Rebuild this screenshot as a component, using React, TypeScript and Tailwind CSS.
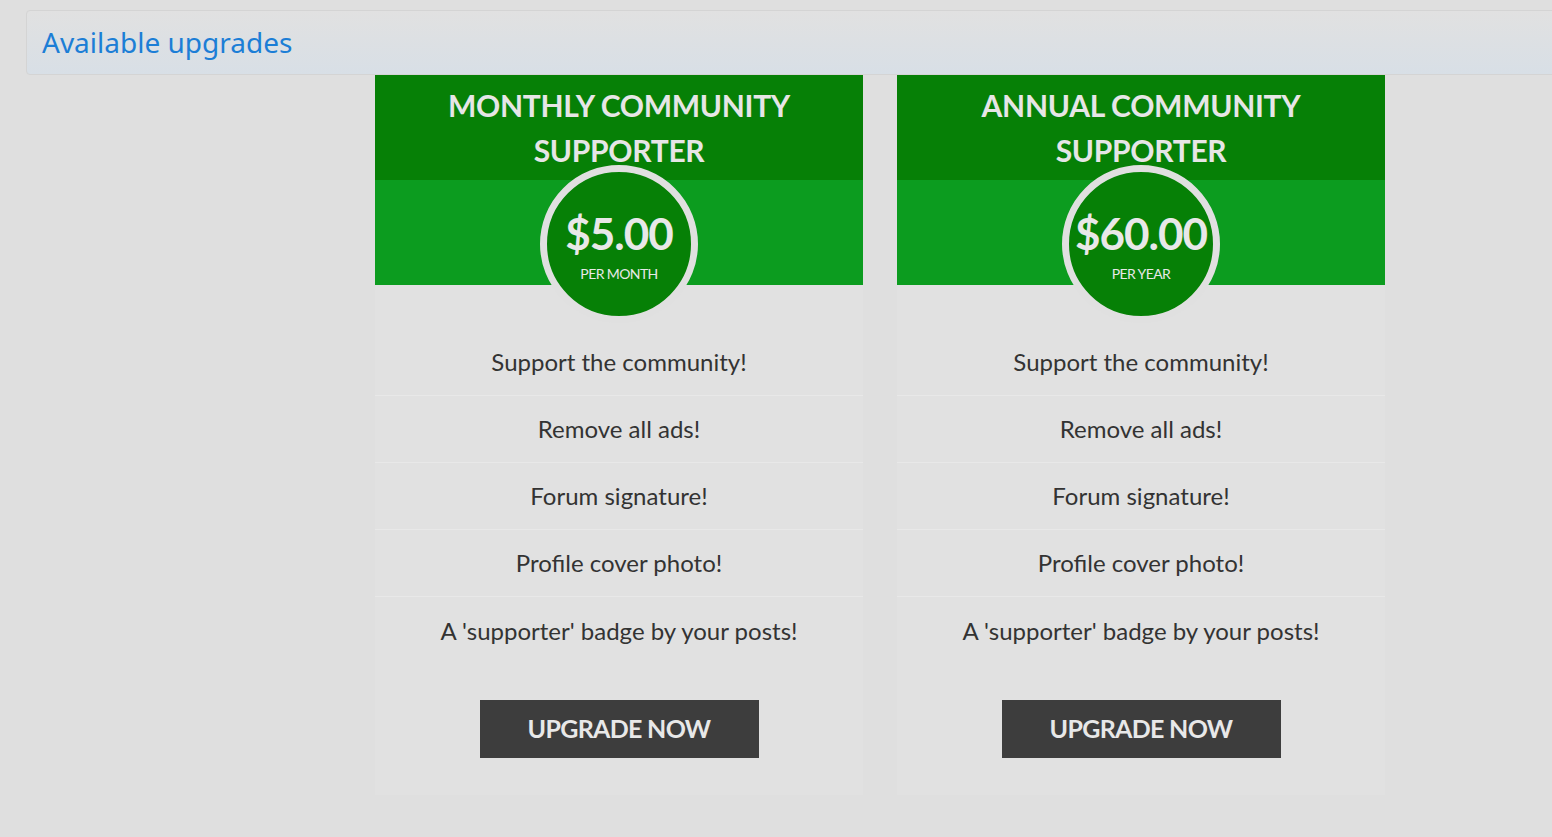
import React from "react";

type Plan = {
    title: string[];
    price: string;
    period: string;
};

const PLANS: Plan[] = [
    { title: ["MONTHLY COMMUNITY", "SUPPORTER"], price: "$5.00", period: "PER MONTH" },
    { title: ["ANNUAL COMMUNITY", "SUPPORTER"], price: "$60.00", period: "PER YEAR" },
];

const FEATURES = [
    "Support the community!",
    "Remove all ads!",
    "Forum signature!",
    "Profile cover photo!",
    "A 'supporter' badge by your posts!",
];

const PlanCard = ({ plan }: { plan: Plan }) => (
    <div className="w-[488px] bg-[#e1e1e1] flex flex-col">
        {/* Title */}
        <div className="bg-[#068006] pt-[8px] pb-[7px] text-center text-[30px] leading-[45px] font-bold text-[#e6e6e6] tracking-[-0.3px]">
            {plan.title.map((line) => (
                <div key={line}>{line}</div>
            ))}
        </div>

        {/* Price band + circle */}
        <div className="bg-[#0c9c1f] h-[105px] flex justify-center">
            <div className="relative z-10 mt-[-15px] w-[158px] h-[158px] rounded-full border-[7px] border-[#e0e0e0] bg-[#068006] flex flex-col items-center pt-[36px] text-[#e8e8e8]">
                <span className="text-[44px] leading-[50px] font-bold tracking-[-1px]">{plan.price}</span>
                <span className="mt-[8px] text-[14px] leading-[16px] tracking-[-0.6px]">{plan.period}</span>
            </div>
        </div>

        {/* Features */}
        <div className="pt-[44px] flex flex-col">
            {FEATURES.map((f, i) => (
                <div
                    key={f}
                    className={`h-[67px] flex items-center justify-center text-[24px] text-[#333333] ${
                        i < FEATURES.length - 1 ? "border-b border-[#e8e8e8]" : ""
                    }`}
                >
                    {f}
                </div>
            ))}
        </div>

        {/* Button */}
        <div className="flex justify-center pt-[36px] pb-[37px]">
            <button className="w-[279px] h-[58px] bg-[#3d3d3d] text-[#e8e8e8] text-[25px] font-bold tracking-[-0.7px]">
                UPGRADE NOW
            </button>
        </div>
    </div>
);

export default function App() {
    return (
        <div className="min-h-[837px] bg-[#dfdfdf] overflow-hidden pt-[10px] font-['Lato',sans-serif]">
            <div className="ml-[26px] mr-[-12px] h-[65px] rounded-[4px] border border-[#d4d4d4] bg-gradient-to-b from-[#e1e1e1] to-[#d8dfe6] flex items-center pl-[15px]">
                <h1 className="font-['Noto_Sans',sans-serif] text-[28px] text-[#1c7ed6] leading-none pb-[1px]">
                    Available upgrades
                </h1>
            </div>
            <div className="flex gap-[34px] pl-[375px]">
                {PLANS.map((p) => (
                    <PlanCard key={p.price} plan={p} />
                ))}
            </div>
        </div>
    );
}
